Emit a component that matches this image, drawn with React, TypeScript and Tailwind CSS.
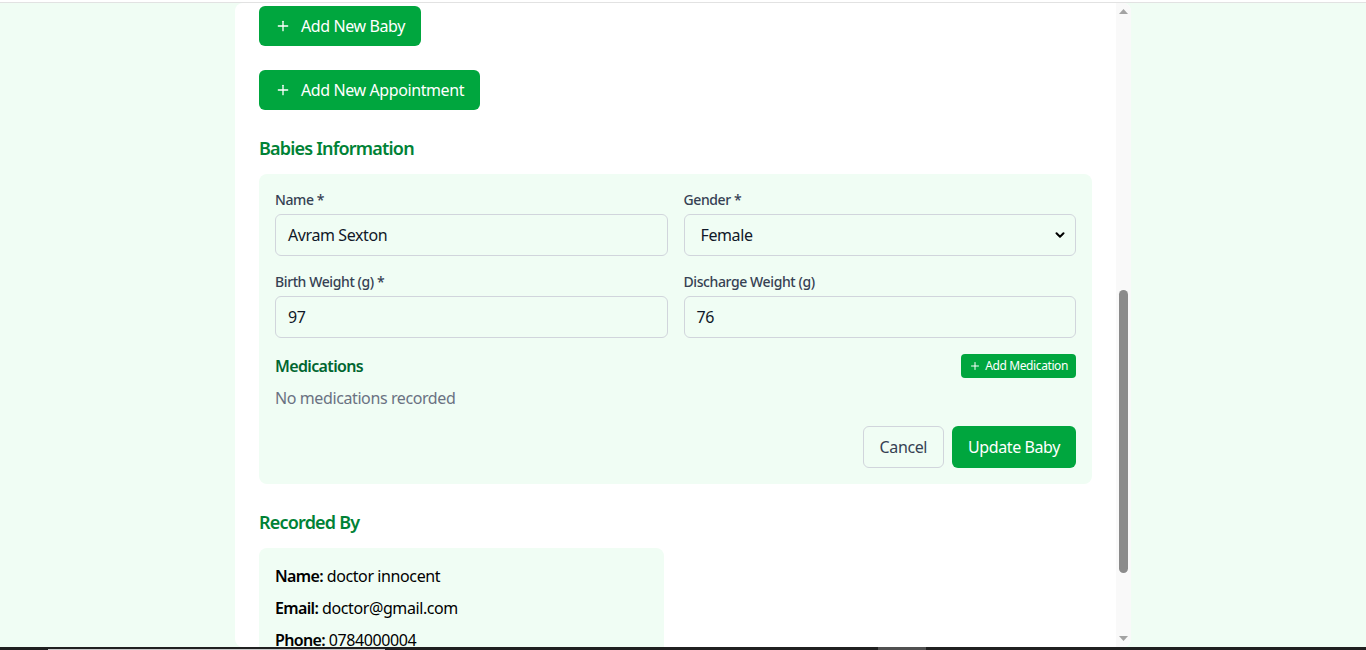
import React from "react";
import { Plus, ChevronDown } from "lucide-react";

const font = "font-['Noto_Sans','Open_Sans',sans-serif] tracking-[-0.025em]";

function Field({ label, value }: { label: string; value: string }) {
  return (
    <div>
      <label className="block text-sm font-medium text-[#364153] mb-1">{label}</label>
      <div className="h-[42px] w-full border border-[#d1d5dc] rounded-md px-3 flex items-center text-base text-[#101828]">
        {value}
      </div>
    </div>
  );
}

export default function App() {
  return (
    <div className={`h-[650px] w-[1366px] overflow-hidden flex flex-col bg-white ${font}`}>
      <div className="h-[2px] bg-white" />
      <div className="h-px bg-[#e2e2e2]" />
      <div className="flex-1 min-h-0 bg-[#f0fdf4] flex justify-center">
        <div className="w-[896px] h-full bg-white rounded-lg flex overflow-hidden">
          {/* scrolled content */}
          <div className="flex-1 min-w-0 px-6 pt-[3px]">
            <div className="space-y-6">
              <button className="h-10 px-4 bg-[#00a63e] text-white rounded-md flex items-center gap-[10px] text-base">
                <Plus size={16} /> Add New Baby
              </button>
              <button className="h-10 px-4 bg-[#00a63e] text-white rounded-md flex items-center gap-[10px] text-base">
                <Plus size={16} /> Add New Appointment
              </button>
            </div>

            <h3 className="mt-6 mb-3 text-lg font-semibold text-[#008236] leading-7 tracking-[-0.045em]">Babies Information</h3>
            <div className="bg-[#f0fdf4] rounded-lg p-4">
              <div className="grid grid-cols-2 gap-4">
                <Field label="Name *" value="Avram Sexton" />
                <div>
                  <label className="block text-sm font-medium text-[#364153] mb-1">Gender *</label>
                  <div className="h-[42px] w-full border border-[#d1d5dc] rounded-md px-4 flex items-center justify-between text-base text-[#101828]">
                    <span>Female</span>
                    <ChevronDown size={14} strokeWidth={3.5} className="text-black -mr-2" />
                  </div>
                </div>
                <Field label="Birth Weight (g) *" value="97" />
                <Field label="Discharge Weight (g)" value="76" />
              </div>

              <div className="mt-4 flex items-center justify-between h-6">
                <h4 className="text-base font-semibold text-[#016630] tracking-[-0.04em]">Medications</h4>
                <button className="h-6 px-2 bg-[#00a63e] text-white rounded flex items-center gap-1 text-xs">
                  <Plus size={12} /> Add Medication
                </button>
              </div>
              <p className="mt-2 text-base text-[#6a7282] leading-6">No medications recorded</p>

              <div className="mt-4 flex justify-end gap-2">
                <button className="h-[42px] px-4 border border-[#d1d5dc] rounded-md text-base text-[#364153]">Cancel</button>
                <button className="h-[42px] px-4 bg-[#00a63e] text-white rounded-md text-base">Update Baby</button>
              </div>
            </div>

            <h3 className="mt-6 mb-3 text-lg font-semibold text-[#008236] leading-7 tracking-[-0.045em]">Recorded By</h3>
            <div className="w-[405px] bg-[#f0fdf4] rounded-lg p-4 space-y-2 text-base text-black">
              <p><span className="font-semibold tracking-[-0.04em]">Name:</span> doctor innocent</p>
              <p><span className="font-semibold tracking-[-0.04em]">Email:</span> doctor@gmail.com</p>
              <p><span className="font-semibold tracking-[-0.04em]">Phone:</span> 0784000004</p>
            </div>
          </div>

          {/* scrollbar */}
          <div className="w-[15px] bg-[#f9f9f9] flex flex-col items-center">
            <svg width="9" height="5" viewBox="0 0 9 5" className="mt-[6px]">
              <path d="M0 5 L4.5 0 L9 5 Z" fill="#a3a3a3" />
            </svg>
            <div className="mt-[276px] w-[9px] h-[283px] rounded-full bg-[#8b8b8b]" />
            <div className="flex-1" />
            <svg width="9" height="5" viewBox="0 0 9 5" className="mb-[6px]">
              <path d="M0 0 L9 0 L4.5 5 Z" fill="#a3a3a3" />
            </svg>
          </div>
        </div>
      </div>
      <div className="h-[3px] bg-[#202020] flex">
        <div className="w-[48px]" />
        <div className="w-[337px] h-px bg-[#c8c8c8] mt-[2px]" />
        <div className="w-[493px]" />
        <div className="w-[48px] bg-[#505050]" />
      </div>
    </div>
  );
}
